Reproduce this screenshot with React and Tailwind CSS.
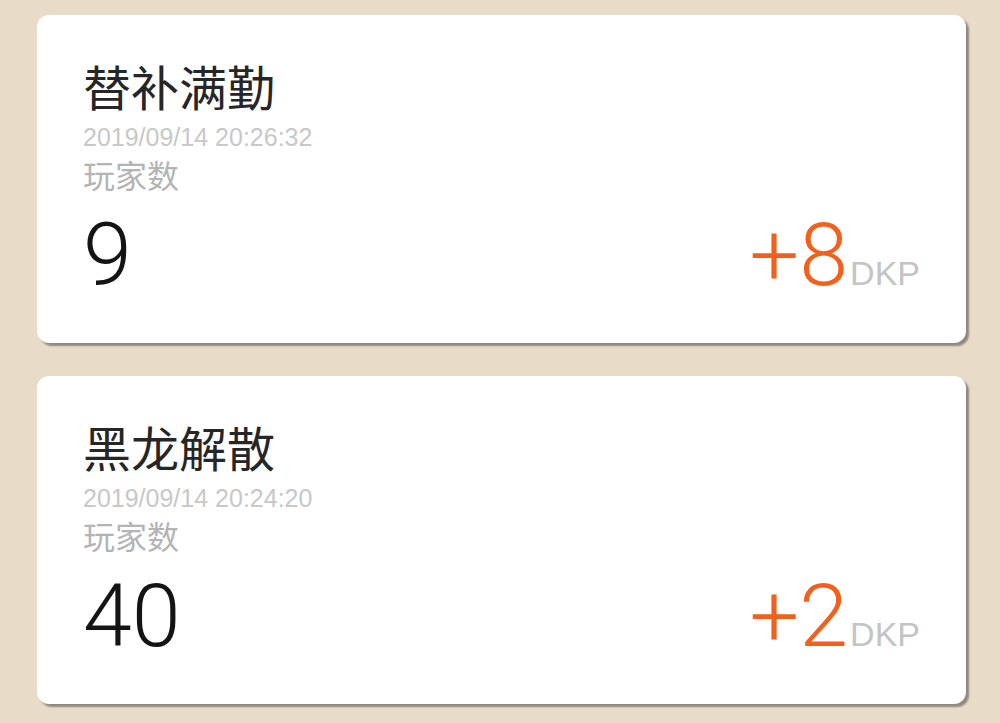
import React from 'react';

const records = [
  { id: 1, title: '替补满勤', time: '2019/09/14 20:26:32', players: 9, dkp: 8 },
  { id: 2, title: '黑龙解散', time: '2019/09/14 20:24:20', players: 40, dkp: 2 },
];

function RecordCard({ record }) {
  return (
    <div className="bg-white rounded-[12px] shadow-[3px_3px_2px_rgba(0,0,0,0.38)] px-[46px] pt-[44px] pb-[42px]">
      <div className="text-[48px] leading-[52px] text-[#262626] font-['Noto_Sans_CJK_SC',sans-serif]">
        {record.title}
      </div>
      <div className="text-[25px] leading-[30px] text-[#c8c8c8] font-['Liberation_Sans',sans-serif] mt-[11px]">
        {record.time}
      </div>
      <div className="text-[32px] leading-[36px] text-[#b4b4b4] font-['Noto_Sans_CJK_SC',sans-serif] mt-[4px]">
        玩家数
      </div>
      <div className="flex items-baseline justify-between mt-[17px] font-['Roboto',sans-serif]">
        <span className="text-[88px] leading-[92px] font-light text-[#141414]">{record.players}</span>
        <span className="flex items-baseline">
          <span className="text-[88px] leading-[92px] font-light text-[#f2601c]">+{record.dkp}</span>
          <span className="text-[34px] leading-[40px] text-[#c4c4c4] ml-[2px] font-['Liberation_Sans',sans-serif]">DKP</span>
        </span>
      </div>
    </div>
  );
}

export default function App() {
  return (
    <div className="min-h-screen bg-[#e8dcc9] pt-[15px] pl-[37px] pr-[34px] pb-[18px] font-['Noto_Sans_CJK_SC',sans-serif]">
      <div className="flex flex-col gap-[33px]">
        {records.map((r) => (
          <RecordCard key={r.id} record={r} />
        ))}
      </div>
    </div>
  );
}
